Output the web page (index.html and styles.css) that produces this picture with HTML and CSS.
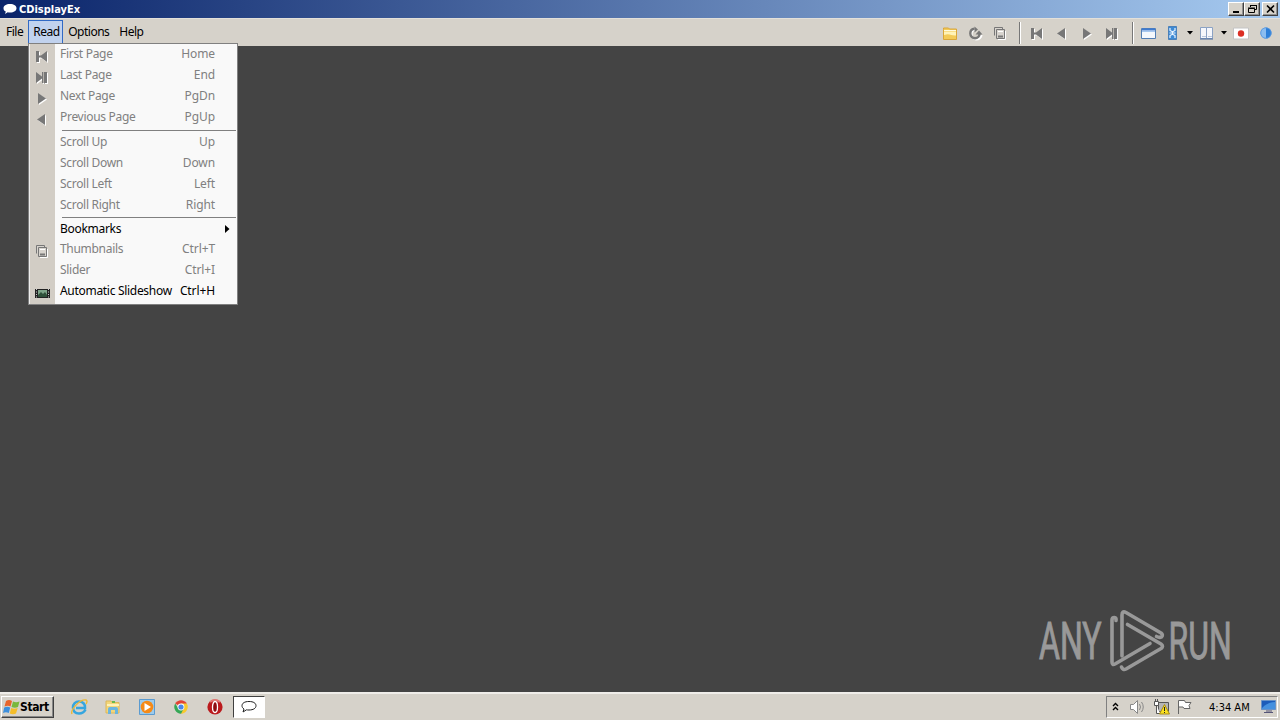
FILE: index.html
```html
<!DOCTYPE html>
<html lang="en">
<head>
    <meta charset="UTF-8">
    <title>CDisplayEx</title>
    <link rel="stylesheet" href="styles.css">
</head>
<body>
    <!-- shared icons -->
    <svg class="defs" width="0" height="0">
        <defs>
            <g id="first-shape"><path d="M1 2h3v4.500h2L12 2v11L6 8.500H4V13H1z"/></g>
            <g id="last-shape"><path d="M1 2l6 4.500V2h5v11H7V8.500L1 13z"/><path d="M8.500 2v11" stroke="#b5b1ab"/></g>
            <g id="next-shape"><path d="M3 2l8 5.500L3 13z"/></g>
            <g id="prev-shape"><path d="M10 2L2 7.500l8 5.500z"/></g>
            <symbol id="first" viewBox="0 0 15 15"><use href="#first-shape" x="1" y="1" fill="#fff"/><use href="#first-shape" fill="#777"/></symbol>
            <symbol id="last" viewBox="0 0 15 15"><use href="#last-shape" x="1" y="1" fill="#fff"/><use href="#last-shape" fill="#777"/></symbol>
            <symbol id="next" viewBox="0 0 15 15"><use href="#next-shape" x="1" y="1" fill="#fff"/><use href="#next-shape" fill="#777"/></symbol>
            <symbol id="prev" viewBox="0 0 15 15"><use href="#prev-shape" x="1" y="1" fill="#fff"/><use href="#prev-shape" fill="#777"/></symbol>
            <symbol id="thumbs" viewBox="0 0 15 15">
                <path d="M12.500 5v8.500H5" fill="none" stroke="#fff"/>
                <path d="M1.500 9.500v-8h8v2M3.500 3.500h8v9h-8z" fill="#d8d4ce" stroke="#777"/>
                <path d="M5 10.500h5" stroke="#777" stroke-width="2"/>
                <path d="M5 5.500h5" stroke="#fff"/>
            </symbol>
        </defs>
    </svg>

    <div class="titlebar">
        <svg class="app-icon" width="14" height="12" viewBox="0 0 14 12"><path d="M7 1c4 0 6.500 1.800 6.500 4.200S11 9.500 7 9.500c-1 0-1.500 0-2.300-.2L2 11l.8-2.500C1.200 7.800.5 6.700.5 5.200.5 2.800 3 1 7 1z" fill="#fff"/></svg>
        <span class="title">CDisplayEx</span>
        <div class="win-buttons">
            <button class="win-btn"><svg width="11" height="10"><path d="M2 8h6" stroke="#000" stroke-width="2"/></svg></button>
            <button class="win-btn"><svg width="11" height="10"><path d="M3.500 3V1.500h6v4H8M3 1.500h7M1.500 4.500h6v4h-6zM1 4h7" fill="none" stroke="#000"/></svg></button>
            <button class="win-btn close"><svg width="11" height="10"><path d="M2 1.500l7 7M9 1.500l-7 7" stroke="#000" stroke-width="1.600"/></svg></button>
        </div>
    </div>

    <div class="menubar">
        <div class="menus">
            <span class="menu-name">File</span>
            <span class="menu-name open">Read</span>
            <span class="menu-name">Options</span>
            <span class="menu-name">Help</span>
        </div>
        <div class="toolbar">
            <svg class="tool w25" viewBox="0 0 16 15" width="16" height="15">
                <path d="M1.500 3.500V2h5l1 1h7v10.500h-13z" fill="#f3cb58" stroke="#d9a63a"/>
                <path d="M2 5.500h12v4C9 10 8 7 2 9z" fill="#fff3b8"/><path d="M2 4.500h12" stroke="#fffbe0"/>
            </svg>
            <svg class="tool w25" viewBox="0 0 15 15" width="15" height="15">
                <path d="M7 4C4.500 4 3.500 6 3.500 8S5 13.500 8 13.500s5.500-2 5.500-4.500" fill="none" stroke="#fff" stroke-width="2"/>
                <path d="M6.500 2.800C4 3 2.300 5 2.300 7.500S4.500 12.200 7 12.200s4.500-2 4.500-4.500" fill="none" stroke="#777" stroke-width="2.400"/>
                <path d="M6.500.500v6L10 3.500zM7.500 8.500l3.500-4 3.500 4z" fill="#777"/>
            </svg>
            <svg class="tool w25" width="15" height="15"><use href="#thumbs"/></svg>
            <i class="divider"></i>
            <svg class="tool w25" width="15" height="15"><use href="#first"/></svg>
            <svg class="tool w25" width="15" height="15"><use href="#prev"/></svg>
            <svg class="tool w25" width="15" height="15"><use href="#next"/></svg>
            <svg class="tool w25" width="15" height="15"><use href="#last"/></svg>
            <i class="divider second"></i>
            <svg class="tool win" width="15" height="15">
                <path d="M.5 2.500h14v10H.5z" fill="#f4f8fd" stroke="#527eb5"/><path d="M1 3.500h13" stroke="#3f7bd0" stroke-width="2"/><path d="M1 5.500h13" stroke="#a6c8ef"/>
            </svg>
            <svg class="tool fit" width="15" height="15">
                <path d="M3.500.500h8v13h-8z" fill="#3d8ad4" stroke="#4b80b8"/>
                <path d="M5 2v2.500l2 1M10 2v2.500l-2 1M5 12V9.500l2-1M10 12V9.500l-2-1M4.500 7h6M7.500 5v4" fill="none" stroke="#e9f4ff" stroke-width="1.200"/>
            </svg>
            <svg class="arrow" width="7" height="4"><path d="M0 0h6L3 3.500z"/></svg>
            <svg class="tool book" width="15" height="15">
                <path d="M1.500 1.500h6v11h-6zM7.500 1.500h6v11h-6z" fill="#f5f7fc" stroke="#8ba2c4"/><path d="M3 10.500h4M9 10.500h4" stroke="#b9c7dd"/><path d="M1 13h13" stroke="#46699c"/>
            </svg>
            <svg class="arrow" width="7" height="4"><path d="M0 0h6L3 3.500z"/></svg>
            <svg class="tool flag" width="16" height="15">
                <path d="M.5 2h15v11H.5z" fill="#fff" stroke="#c4c4c4"/><circle cx="8" cy="7.500" r="3.200" fill="#dc2f24"/>
            </svg>
            <svg class="tool w25" width="14" height="14">
                <circle cx="7" cy="7" r="5.500" fill="#2d7fd8"/><path d="M7 1.500a5.500 5.500 0 000 11z" fill="#8bbdf0"/><circle cx="7" cy="7" r="5.200" fill="none" stroke="#5a99df" stroke-width=".8"/>
            </svg>
        </div>
    </div>

    <div class="dropdown">
        <div class="item off"><span class="ico"><svg width="15" height="15"><use href="#first"/></svg></span><span class="label">First Page</span><span class="key">Home</span></div>
        <div class="item off"><span class="ico"><svg width="15" height="15"><use href="#last"/></svg></span><span class="label">Last Page</span><span class="key">End</span></div>
        <div class="item off"><span class="ico"><svg width="15" height="15"><use href="#next"/></svg></span><span class="label">Next Page</span><span class="key">PgDn</span></div>
        <div class="item off"><span class="ico"><svg width="15" height="15"><use href="#prev"/></svg></span><span class="label">Previous Page</span><span class="key">PgUp</span></div>
        <div class="sep"></div>
        <div class="item off"><span class="ico"></span><span class="label">Scroll Up</span><span class="key">Up</span></div>
        <div class="item off"><span class="ico"></span><span class="label">Scroll Down</span><span class="key">Down</span></div>
        <div class="item off"><span class="ico"></span><span class="label">Scroll Left</span><span class="key">Left</span></div>
        <div class="item off"><span class="ico"></span><span class="label">Scroll Right</span><span class="key">Right</span></div>
        <div class="sep short"></div>
        <div class="item sub"><span class="ico"></span><span class="label">Bookmarks</span><svg class="more" width="5" height="8"><path d="M0 0v8l4.500-4z"/></svg></div>
        <div class="item off"><span class="ico"><svg width="15" height="15"><use href="#thumbs"/></svg></span><span class="label">Thumbnails</span><span class="key">Ctrl+T</span></div>
        <div class="item off"><span class="ico"></span><span class="label">Slider</span><span class="key">Ctrl+I</span></div>
        <div class="item"><span class="ico"><svg class="film" width="15" height="11"><path d="M0 1h15v9H0z" fill="#222"/><path d="M3 2h9v7H3z" fill="#7ea489"/><path d="M3 7l3-3 2 2 2-2 2 3v2H3z" fill="#2e5039"/><path d="M1.500 1v9M13.500 1v9" stroke="#ccc" stroke-dasharray="1 1.500"/></svg></span><span class="label">Automatic Slideshow</span><span class="key">Ctrl+H</span></div>
    </div>

    <div class="workspace">
        <svg class="watermark" width="200" height="64" viewBox="0 0 200 64">
            <g class="brand">
                <text transform="translate(1 50) scale(.62 1)" textLength="101" lengthAdjust="spacingAndGlyphs">ANY</text>
                <text transform="translate(130.5 50) scale(.62 1)" textLength="102" lengthAdjust="spacingAndGlyphs">RUN</text>
            </g>
            <g class="play">
                <path d="M78 11.500Q78.500 8.500 76.500 8.500Q74 8.500 74 11V53q0 3.500 3 2l35-20.500"/>
                <path d="M84 47V6q0-4.500 4-2.500L123 24q2.500 2 .500 4-2 1-5-.500"/>
                <path d="M89.500 15.500L123 35q3 2 0 4.500L88 60q-3 1.500-4.500-2"/>
            </g>
        </svg>
    </div>

    <div class="taskbar">
        <button class="start">
            <svg width="17" height="16" viewBox="0 0 17 16">
                <path d="M3 2q3-2 6 0L7.500 7.500Q5 6 1.500 7.500z" fill="#e8642b"/><path d="M10 2.500q3 1.500 6.500 0L15 8q-3 1.500-6.500 0z" fill="#79b83c"/>
                <path d="M1.200 8.500q3-1.500 6 0L5.800 14Q3 12.500 0 14z" fill="#3d8fdc"/><path d="M8.200 9q3 1.500 6.500 0L13 14.500q-3 1.500-6.200 0z" fill="#f4bd29"/>
            </svg>
            <span>Start</span>
        </button>
        <div class="quick">
            <svg width="18" height="18" viewBox="0 0 18 18">
                <path d="M15.500 11.500Q13.500 15.500 9 15.500c-4 0-6-2.500-6-6s2.500-6 6-6 6.500 2.500 6 6.500H6" fill="none" stroke="#36a6df" stroke-width="2.600"/>
                <path d="M2 16C0 12 10 1 16 2q2 1 0 4" fill="none" stroke="#edb936" stroke-width="1.400"/>
            </svg>
            <svg width="18" height="18" viewBox="0 0 18 18">
                <path d="M2 3h5l1 1.500h7V15H2z" fill="#f3d67a" stroke="#dcb75a"/><path d="M3 6h12v2H3z" fill="#fff2b7"/>
                <path d="M4 16v-5q0-2 2-2h6q2 0 2 2v5h-3v-4H7v4z" fill="#6bb5df"/><path d="M8 3h3v2H8z" fill="#67b94e"/>
            </svg>
            <svg width="18" height="18" viewBox="0 0 18 18">
                <path d="M1.500 1.500h15v15h-15z" fill="#9ccbed" stroke="#5b9bd0"/><circle cx="9" cy="9" r="6.300" fill="#f58a18"/><path d="M6.500 5l6.500 4-6.500 4z" fill="#fff"/>
            </svg>
            <svg width="18" height="18" viewBox="0 0 18 18">
                <path d="M9 9L3.200 5.600A6.700 6.700 0 0114.800 5.600z" fill="#e24234"/><path d="M9 5.600h5.800A6.700 6.700 0 019 15.700z" fill="#f8c92e"/><path d="M3.200 5.600A6.700 6.700 0 009 15.700L11.500 11 6 10z" fill="#36a756"/>
                <circle cx="9" cy="9" r="3.400" fill="#fff"/><circle cx="9" cy="9" r="2.600" fill="#4b87e8"/>
            </svg>
            <svg width="18" height="18" viewBox="0 0 18 18">
                <circle cx="9" cy="9" r="7.600" fill="#bb1a1d"/><path d="M4 4q5-4 10 0" fill="none" stroke="#e27672" stroke-width="2"/><ellipse cx="9" cy="9" rx="2.500" ry="5.500" fill="#8f0d11" stroke="#fff" stroke-width="1.300"/>
            </svg>
        </div>
        <button class="task">
            <svg width="18" height="14" viewBox="0 0 18 14"><path d="M9 1.500c4.500 0 7 1.700 7 4.200S13.500 10 9 10c-1 0-1.700 0-2.500-.2L3 12l1-3C2.500 8 2 7 2 5.700c0-2.500 2.500-4.200 7-4.200z" fill="#fff" stroke="#222"/></svg>
        </button>
        <div class="tray">
            <svg class="chevrons" width="8" height="10"><path d="M1 4l2.500-2.500L6 4M1 8l2.500-2.500L6 8" fill="none" stroke="#000" stroke-width="1.400"/></svg>
            <svg class="speaker" width="17" height="16">
                <path d="M1.500 5.500h3l4-4v13l-4-4h-3z" fill="#fff" stroke="#888"/><path d="M10.500 5q2 3 0 6M12.500 3q3.500 5 0 10" fill="none" stroke="#888"/>
            </svg>
            <svg class="net" width="18" height="16">
                <path d="M5.500 3.500h10v9h-10z" fill="#b5b5b5" stroke="#555"/><path d="M1.500 2.500h4v4h-4zM3.500 6v8.500H7M2.500 0v2M4.500 0v2" fill="#fff" stroke="#555"/>
                <path d="M11.500 5.500l5 9.500h-10z" fill="#fbe21f" stroke="#a88b17"/><path d="M11.500 8v4M11.500 13v1" stroke="#222"/>
            </svg>
            <svg class="pennant" width="17" height="16"><path d="M2.500 15V1.500h6l1 2H15l-2 3 1 3H8l-1-1.500H3" fill="#fff" stroke="#666"/></svg>
            <span class="clock">4:34 AM</span>
            <svg class="desktop" width="16" height="14"><path d="M.5.500h14v9H.5z" fill="#1c5cba" stroke="#6993c8"/><path d="M1 8Q7 2 14 2v7H1z" fill="#4691df"/><path d="M5 11h6M3 12.500h9" stroke="#557"/></svg>
        </div>
    </div>
</body>
</html>
```
FILE: styles.css
```css
:root {
    --face: #d6d2ca;
    --canvas: #444;
    --menu-bg: #f9f9f9;
    --off: #808080;
}
* { box-sizing: border-box; }
body {
    margin: 0;
    width: 1280px; height: 720px;
    overflow: hidden;
    display: flex; flex-direction: column;
    background: var(--canvas);
    color: #000;
    font-family: 'Noto Sans', sans-serif;
    font-size: 12px;
}
.defs { position: absolute; }
button { padding: 0; font: inherit; color: inherit; border-radius: 0; }
svg { flex: none; display: block; }

.titlebar {
    height: 18px;
    display: flex; align-items: center;
    padding: 0 2px 0 3px;
    background: linear-gradient(90deg, #0a246a, #a6caf0);
}
.title {
    margin-left: 2px;
    color: #fff;
    font-family: 'DejaVu Sans Condensed', 'DejaVu Sans', sans-serif;
    font-stretch: condensed;
    font-weight: 700; font-size: 11px;
}
.win-buttons { margin-left: auto; display: flex; }
.win-btn {
    width: 16px; height: 14px;
    display: flex; align-items: center; justify-content: center;
    background: var(--face);
    border: 1px solid;
    border-color: #fff #404040 #404040 #fff;
    box-shadow: inset -1px -1px #909090;
}
.win-btn.close { margin-left: 2px; }

.menubar {
    height: 28px;
    display: flex;
    background: var(--face);
    border-top: 1px solid #e3e0da;
}
.menus { display: flex; padding: 1px 0 0 1px; }
.menu-name {
    height: 24px;
    padding: 0 4px;
    border: 1px solid transparent;
    line-height: 22px;
    letter-spacing: -0.5px;
}
.menu-name.open {
    width: 35px;
    background: #c1d2ee;
    border-color: #316ac5;
}
.toolbar { margin-left: auto; display: flex; align-items: center; padding: 1px 2px 0 0; }
.w25 { margin: 0 5px; }
.divider {
    width: 2px; height: 22px;
    margin: 0 4px 0 6px;
    background: #777;
    border-right: 1px solid #fff;
}
.divider.second { margin-left: 7px; }
.win { margin: 0 6px 0 3px; }
.fit { margin: 0 7px 0 3px; }
.book { margin: 0 7px 0 5px; }
.flag { margin: 0 5px; }

.dropdown {
    position: absolute; left: 28px; top: 43px; z-index: 2;
    width: 210px; height: 262px;
    border: 1px solid #808080;
    background: linear-gradient(90deg, #d2cdc5 26px, var(--menu-bg) 26px);
    box-shadow: inset 1px 0 #eee;
}
.item {
    height: 21px;
    display: flex; align-items: center;
    padding-right: 22px;
    line-height: 20px;
    white-space: nowrap;
}
.item.off { color: var(--off); }
.item.sub { height: 20px; padding-right: 7px; }
.ico { width: 31px; padding: 3px 0 0 6px; }
.label, .key { padding-bottom: 1px; line-height: 18px; }
.label { letter-spacing: -0.3px; }
.key { letter-spacing: -0.1px; }
.key, .more { margin-left: auto; }
.sep { height: 4px; margin-left: 33px; padding: 2px 1px 0 0; }
.sep::before { content: ""; display: block; height: 1px; background: #808080; }
.sep.short { height: 3px; padding-top: 1px; }

.workspace {
    flex: 1;
    display: flex; align-items: flex-end; justify-content: flex-end;
    padding: 0 42px 19px 0;
}
.brand {
    fill: #999; stroke: #999; stroke-width: 1;
    font-family: Roboto, sans-serif; font-size: 51px;
}
.play {
    fill: none; stroke: #999; stroke-width: 3.6;
    stroke-linejoin: round; stroke-linecap: round;
}

.taskbar {
    height: 28px;
    display: flex; align-items: center;
    padding: 0 2px 0 1px;
    background: var(--face);
    border-top: 2px solid #efede9;
}
.start {
    width: 53px; height: 22px;
    display: flex; align-items: center;
    padding-left: 1px;
    background: var(--face);
    border: 1px solid;
    border-color: #fff #404040 #404040 #fff;
    box-shadow: inset -1px -1px #888;
    font-family: 'DejaVu Sans Condensed', 'DejaVu Sans', sans-serif;
    font-stretch: condensed;
    font-weight: 700;
    letter-spacing: -0.4px;
}
.quick { display: flex; gap: 16px; padding-left: 16px; }
.task {
    width: 32px; height: 22px;
    margin-left: 9px;
    display: flex; align-items: center; justify-content: center;
    background: #fff;
    border: 1px solid;
    border-color: #404040 #fff #fff #404040;
}
.tray {
    width: 172px; height: 22px;
    margin-left: auto;
    display: flex; align-items: center;
    padding-left: 5px;
    border: 1px solid;
    border-color: #808080 #fff #fff #808080;
}
.speaker { margin-left: 9px; }
.net { margin-left: 7px; }
.pennant { margin-left: 5px; }
.clock {
    margin-left: 16px;
    font-family: 'DejaVu Sans Condensed', 'DejaVu Sans', sans-serif;
    font-stretch: condensed;
    font-size: 11px;
}
.desktop { margin-left: auto; }
```
